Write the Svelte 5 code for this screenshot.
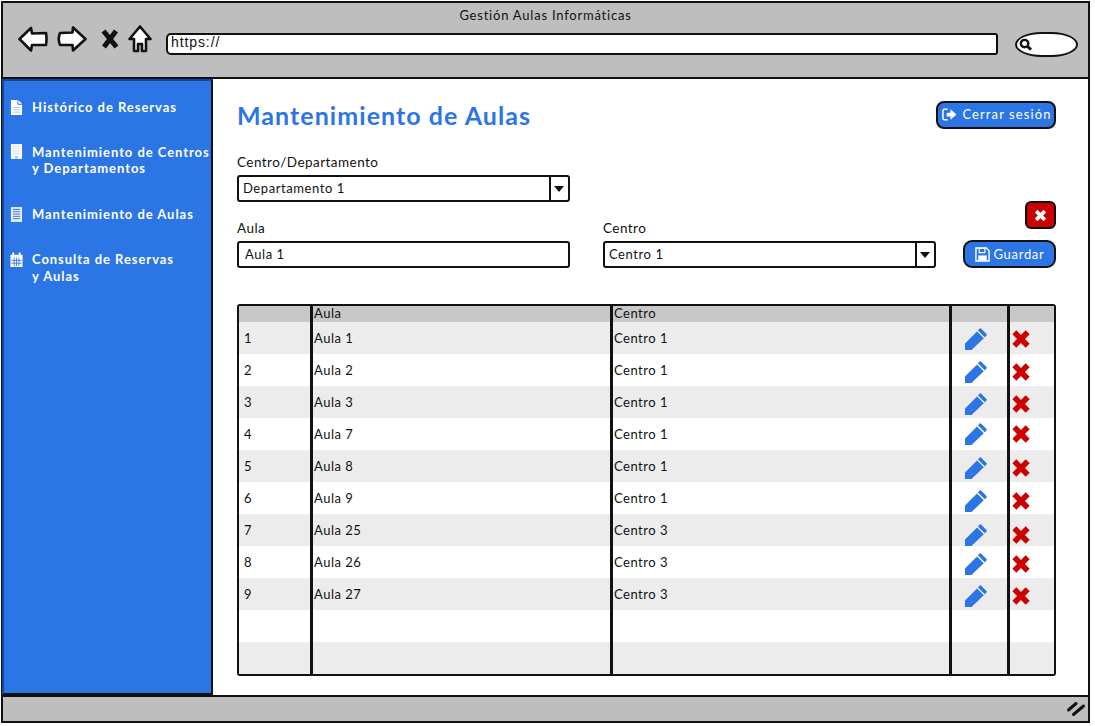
<script lang="ts">
	const navItems = [
		{ icon: 'file', lines: ['Histórico de Reservas'] },
		{ icon: 'building', lines: ['Mantenimiento de Centros', 'y Departamentos'] },
		{ icon: 'building-alt', lines: ['Mantenimiento de Aulas'] },
		{ icon: 'calendar', lines: ['Consulta de Reservas', 'y Aulas'] }
	];

	// nudge: the hand placed icons sit a little off the row centre
	const rows = [
		{ id: '1', aula: 'Aula 1', centro: 'Centro 1', nudge: 1 },
		{ id: '2', aula: 'Aula 2', centro: 'Centro 1', nudge: 2 },
		{ id: '3', aula: 'Aula 3', centro: 'Centro 1', nudge: 2 },
		{ id: '4', aula: 'Aula 7', centro: 'Centro 1', nudge: 0 },
		{ id: '5', aula: 'Aula 8', centro: 'Centro 1', nudge: 2 },
		{ id: '6', aula: 'Aula 9', centro: 'Centro 1', nudge: 3 },
		{ id: '7', aula: 'Aula 25', centro: 'Centro 3', nudge: 5 },
		{ id: '8', aula: 'Aula 26', centro: 'Centro 3', nudge: 2 },
		{ id: '9', aula: 'Aula 27', centro: 'Centro 3', nudge: 2 },
		{ id: '', aula: '', centro: '', nudge: 0, empty: true },
		{ id: '', aula: '', centro: '', nudge: 0, empty: true }
	];
</script>

<div class="window">
	<header class="topbar">
		<div class="window-title">Gestión Aulas Informáticas</div>
		<div class="toolbar">
			<svg class="tool-back" viewBox="0 0 30 26" aria-hidden="true">
				<path d="M1.5 13 L13 2 L14 7.5 L28 7 Q29 13 28 19 L14 19 L13 24.5 Z" />
			</svg>
			<svg class="tool-forward" viewBox="0 0 30 26" aria-hidden="true">
				<path d="M28.5 13 L16 1.5 L15.5 6.5 L3 7 Q0.5 13 3 19 L15.5 19 L16 24.5 Z" />
			</svg>
			<svg class="tool-stop" viewBox="0 0 18 20" aria-hidden="true">
				<path d="M2.5 2 L15.5 18 M15 2 L3 18" />
			</svg>
			<svg class="tool-home" viewBox="0 0 24 28" aria-hidden="true">
				<path d="M12 1.5 L22.5 14 L18 14 L18 26 L14 26 L14 19 L10 19 L10 26 L6 26 L6 14 L1.5 14 Z" />
			</svg>
			<div class="url">https://</div>
			<div class="search">
				<svg viewBox="0 0 14 14" aria-hidden="true">
					<circle cx="6" cy="6" r="4" />
					<path d="M9 9 L13 12.5" />
				</svg>
			</div>
		</div>
	</header>

	<div class="body">
		<nav class="sidebar">
			{#each navItems as item}
				<div class="nav-item">
					<svg class="nav-icon" viewBox="0 0 14 16" aria-hidden="true">
						{#if item.icon === 'file'}
							<path d="M1 0 H8 V5 H13 V16 H1 Z M9 0 L13 4 H9 Z" fill="#fff" />
							<path d="M3.5 8 H10.5 M3.5 10.5 H10.5 M3.5 13 H10.5" stroke="#a9c8f4" />
						{:else if item.icon === 'building'}
							<path d="M1 0 H13 V16 H1 Z" fill="#fff" />
							<path d="M3 2.5 H11 M3 5 H11 M3 7.5 H11 M3 10 H11" stroke="#a9c8f4" stroke-dasharray="1.5 1" />
							<path d="M5.5 13 H8.5 V16 H5.5 Z" fill="#a9c8f4" />
						{:else if item.icon === 'building-alt'}
							<path d="M1 0 H13 V16 H1 Z" fill="#e6effc" />
							<path d="M3 2.5 H11 M3 5 H11 M3 7.5 H11 M3 10 H11 M3 12.5 H11" stroke="#2b75e4" />
						{:else}
							<path d="M0.5 3 H13.5 V16 H0.5 Z M0.5 6 H13.5" fill="#fff" />
							<path d="M3.5 0.5 V4 M10.5 0.5 V4" stroke="#fff" stroke-width="2" />
							<path d="M4.5 6 V15 M7 6 V15 M9.5 6 V15 M1.5 9 H12.5 M1.5 12 H12.5" stroke="#2b75e4" stroke-width="0.9" />
						{/if}
					</svg>
					<div class="nav-label">
						{#each item.lines as line}
							<div>{line}</div>
						{/each}
					</div>
				</div>
			{/each}
		</nav>

		<main class="content">
			<div class="heading">
				<h1>Mantenimiento de Aulas</h1>
				<button class="btn logout">
					<svg class="btn-icon" viewBox="0 0 16 14" aria-hidden="true">
						<path d="M6 1.5 H2.5 Q1 1.5 1 3 V11 Q1 12.5 2.5 12.5 H6" fill="none" stroke="#fff" stroke-width="1.6" />
						<path d="M5 5 H9 V1.5 L15.5 7 L9 12.5 V9 H5 Z" fill="#fff" />
					</svg>
					Cerrar sesión
				</button>
			</div>

			<div class="form">
				<div class="field dept">
					<span class="field-label">Centro/Departamento</span>
					<div class="select">
						<span class="value">Departamento 1</span>
						<span class="caret"></span>
					</div>
				</div>
				<div class="field aula">
					<span class="field-label">Aula</span>
					<div class="input">Aula 1</div>
				</div>
				<div class="field centro">
					<span class="field-label">Centro</span>
					<div class="select">
						<span class="value">Centro 1</span>
						<span class="caret"></span>
					</div>
				</div>
				<div class="actions">
					<button class="btn-close" aria-label="Cerrar">
						<svg viewBox="0 0 12 12" aria-hidden="true">
							<path d="M2 2 L10 10 M10 2 L2 10" />
						</svg>
					</button>
					<button class="btn save">
						<svg class="btn-icon" viewBox="0 0 16 16" aria-hidden="true">
							<path d="M1 1 H12 L15 4 V15 H1 Z" fill="none" stroke="#fff" stroke-width="1.5" />
							<path d="M4.5 1.5 H10.5 V6 H4.5 Z" fill="none" stroke="#fff" stroke-width="1.2" />
							<path d="M3.5 9 H12.5 V14.5 H3.5 Z" fill="#fff" />
						</svg>
						Guardar
					</button>
				</div>
			</div>

			<table class="grid">
				<colgroup>
					<col class="c-id" />
					<col class="c-aula" />
					<col class="c-centro" />
					<col class="c-edit" />
					<col class="c-del" />
				</colgroup>
				<thead>
					<tr>
						<th></th>
						<th>Aula</th>
						<th>Centro</th>
						<th></th>
						<th></th>
					</tr>
				</thead>
				<tbody>
					{#each rows as row}
						<tr>
							<td>{row.id}</td>
							<td>{row.aula}</td>
							<td>{row.centro}</td>
							<td class="icon-cell">
								{#if !row.empty}
									<svg class="pencil" style="transform: translateY({row.nudge}px)" viewBox="0 0 24 24" aria-hidden="true">
										<path d="M17 1.5 L22.5 7 Q23.2 7.8 22.5 8.5 L20.8 10.2 L14 3.6 L15.6 1.6 Q16.3 0.9 17 1.5 Z" />
										<path d="M13 4.6 L19.8 11.2 L7.5 23 H1 V16.5 Z M4 17.5 L13 8.8 M3 20.5 L6 20.5" />
									</svg>
								{/if}
							</td>
							<td class="icon-cell">
								{#if !row.empty}
									<svg class="cross" style="transform: translateY({row.nudge}px)" viewBox="0 0 18 18" aria-hidden="true">
										<path d="M3 3 L15 15 M15 3 L3 15" />
									</svg>
								{/if}
							</td>
						</tr>
					{/each}
				</tbody>
			</table>
		</main>
	</div>

	<footer class="statusbar">
		<svg viewBox="0 0 18 14" aria-hidden="true">
			<path d="M1.5 8 L9 1.5 M6.5 12.5 L16.5 4" />
		</svg>
	</footer>
</div>

<style>
	:global(body) {
		background: #fff;
		color: #111;
		font-family: 'Lato', 'Noto Sans', sans-serif;
	}

	.window {
		box-sizing: border-box;
		width: 1089px;
		height: 722px;
		margin: 1px 0 0 1px;
		display: flex;
		flex-direction: column;
		border: 2.5px solid #111;
		border-bottom-width: 2px;
		background: #fff;
	}

	.topbar {
		flex: 0 0 76px;
		box-sizing: border-box;
		background: #bebebe;
		border-bottom: 2.5px solid #111;
	}

	.window-title {
		padding-top: 4px;
		font-size: 13px;
		line-height: 16px;
		letter-spacing: 0.78px;
		text-align: center;
	}

	.toolbar {
		display: flex;
		align-items: center;
		height: 28px;
		margin-top: 2px;
		padding-left: 15px;
	}

	.toolbar svg {
		flex: none;
	}

	.toolbar path {
		stroke: #111;
		stroke-width: 2.6;
		stroke-linejoin: round;
		fill: #fff;
	}

	.tool-back,
	.tool-forward {
		width: 30px;
		height: 26px;
	}

	.tool-forward {
		margin-left: 9px;
	}

	.tool-stop {
		width: 18px;
		height: 20px;
		margin-left: 14px;
	}

	.toolbar .tool-stop path {
		stroke-width: 5;
		fill: none;
	}

	.tool-home {
		width: 24px;
		height: 28px;
		margin-left: 9px;
	}

	.url {
		box-sizing: border-box;
		width: 832px;
		height: 22px;
		margin: 10px 0 0 14px;
		padding-left: 3px;
		background: #fff;
		border: 2.5px solid #111;
		border-radius: 5px 3px 3px 5px;
		font-family: 'Liberation Sans', sans-serif;
		font-size: 14px;
		letter-spacing: 0.9px;
		line-height: 15px;
	}

	.search {
		box-sizing: border-box;
		width: 63px;
		height: 25px;
		margin: 10px 0 0 17px;
		padding: 4px 0 0 2px;
		background: #fff;
		border: 2.5px solid #111;
		border-radius: 42% / 50%;
	}

	.search svg {
		display: block;
		width: 13px;
		height: 13px;
	}

	.search circle {
		fill: #fff;
		stroke: #111;
		stroke-width: 2.6;
	}

	.search path {
		stroke-width: 3;
	}

	.body {
		flex: 1;
		min-height: 0;
		display: flex;
	}

	.sidebar {
		flex: 0 0 211px;
		box-sizing: border-box;
		padding: 18px 0 0 6px;
		margin-left: -1px;
		background: #2b75e4;
		border: 2px solid #111;
		border-top-color: #14469a;
		border-left-color: #14469a;
		color: #fff;
	}

	.nav-item {
		display: flex;
		align-items: flex-start;
		margin-bottom: 28px;
	}

	.nav-item:nth-child(2),
	.nav-item:nth-child(3) {
		margin-bottom: 29px;
	}

	.nav-icon {
		flex: none;
		width: 13px;
		height: 15px;
		margin-top: 1px;
	}

	.nav-item:nth-child(2) .nav-icon {
		margin-top: 0;
	}

	.nav-label {
		margin-left: 9px;
		font-size: 13px;
		line-height: 16.5px;
		font-weight: 700;
		letter-spacing: 0.95px;
		white-space: nowrap;
	}

	.content {
		flex: 1;
		min-width: 0;
		box-sizing: border-box;
		padding: 22px 32px 0 24px;
	}

	.heading {
		display: flex;
		align-items: center;
		justify-content: space-between;
		height: 28px;
	}

	h1 {
		margin: 0;
		color: #2b75e4;
		font-size: 25px;
		line-height: 28px;
		font-weight: 700;
		letter-spacing: 1.05px;
	}

	.btn {
		display: flex;
		align-items: center;
		justify-content: center;
		gap: 4px;
		box-sizing: border-box;
		height: 28px;
		padding: 0;
		width: 120px;
		background: #2b75e4;
		color: #fff;
		border: 2.5px solid #111;
		border-radius: 8px;
		font-family: inherit;
		font-size: 13px;
		letter-spacing: 1.1px;
	}

	.logout {
		gap: 5px;
		padding-left: 2px;
		padding-bottom: 2px;
	}

	.btn-icon {
		width: 15px;
		height: 15px;
		flex: none;
	}

	.form {
		display: grid;
		grid-template-columns: 333px 33px 333px 1fr;
		grid-template-rows: 66px 66px;
		margin-top: 21px;
		font-size: 13px;
		letter-spacing: 0.57px;
	}

	.field {
		display: flex;
		flex-direction: column;
	}

	.field-label {
		height: 25px;
		line-height: 24px;
		font-size: 13.5px;
		letter-spacing: 0.45px;
	}

	.dept {
		grid-column: 1;
		grid-row: 1;
	}

	.aula {
		grid-column: 1;
		grid-row: 2;
	}

	.centro {
		grid-column: 3;
		grid-row: 2;
	}

	.select,
	.input {
		box-sizing: border-box;
		height: 27px;
		background: #fff;
		border: 2.5px solid #111;
		border-radius: 3px;
		line-height: 22px;
	}

	.select {
		display: flex;
		justify-content: space-between;
	}

	.value {
		padding-left: 4px;
	}

	.input {
		padding-left: 6px;
	}

	.caret {
		position: relative;
		width: 17px;
		border-left: 2px solid #111;
	}

	.caret::after {
		content: '';
		position: absolute;
		left: 3px;
		top: 9px;
		border: 5.5px solid transparent;
		border-top: 6px solid #111;
		border-bottom: 0;
	}

	.actions {
		grid-column: 4;
		grid-row: 1 / 3;
		display: flex;
		flex-direction: column;
		align-items: flex-end;
		justify-content: flex-end;
		gap: 11px;
		padding-bottom: 14px;
	}

	.btn-close {
		box-sizing: border-box;
		display: flex;
		align-items: center;
		justify-content: center;
		width: 31px;
		height: 28px;
		padding: 0;
		background: #cc0000;
		border: 2.5px solid #111;
		border-radius: 6px;
	}

	.btn-close svg {
		width: 13px;
		height: 13px;
	}

	.btn-close path {
		stroke: #fff;
		stroke-width: 3.4;
		fill: none;
	}

	.save {
		width: 93px;
		border-radius: 9px;
		letter-spacing: 0.7px;
	}

	.grid {
		box-sizing: border-box;
		width: 819px;
		height: 372px;
		margin-top: 22px;
		border: 2.5px solid #111;
		border-radius: 3px;
		border-collapse: separate;
		border-spacing: 0;
		table-layout: fixed;
		font-size: 13px;
		letter-spacing: 0.5px;
	}

	.c-id {
		width: 74px;
	}

	.c-aula {
		width: 300px;
	}

	.c-centro {
		width: 339px;
	}

	.c-edit {
		width: 58px;
	}

	th,
	td {
		padding: 0 0 0 1px;
		text-align: left;
		vertical-align: middle;
		border-right: 3px solid #111;
		box-sizing: border-box;
	}

	th:first-child,
	td:first-child {
		padding-left: 5px;
	}

	th:last-child,
	td:last-child {
		border-right: 0;
	}

	th {
		height: 16px;
		padding-bottom: 2px;
		background: #c8c8c8;
		font-weight: 400;
		line-height: 14px;
	}

	td {
		height: 32px;
	}

	tbody tr:nth-child(odd) td {
		background: #ececec;
	}

	.icon-cell {
		padding: 0;
		line-height: 0;
	}

	.pencil {
		display: block;
		width: 24px;
		height: 24px;
		margin-left: 12px;
	}

	.pencil path {
		fill: #2b75e4;
	}

	.cross {
		display: block;
		width: 20px;
		height: 20px;
		margin-left: 1px;
	}

	.cross path {
		stroke: #cc0000;
		stroke-width: 5;
		fill: none;
	}

	.statusbar {
		flex: 0 0 26px;
		display: flex;
		justify-content: flex-end;
		align-items: center;
		box-sizing: border-box;
		padding-right: 3px;
		background: #bebebe;
		border-top: 2px solid #111;
	}

	.statusbar svg {
		width: 18px;
		height: 14px;
	}

	.statusbar path {
		stroke: #111;
		stroke-width: 3;
		stroke-linecap: round;
		fill: none;
	}
</style>
